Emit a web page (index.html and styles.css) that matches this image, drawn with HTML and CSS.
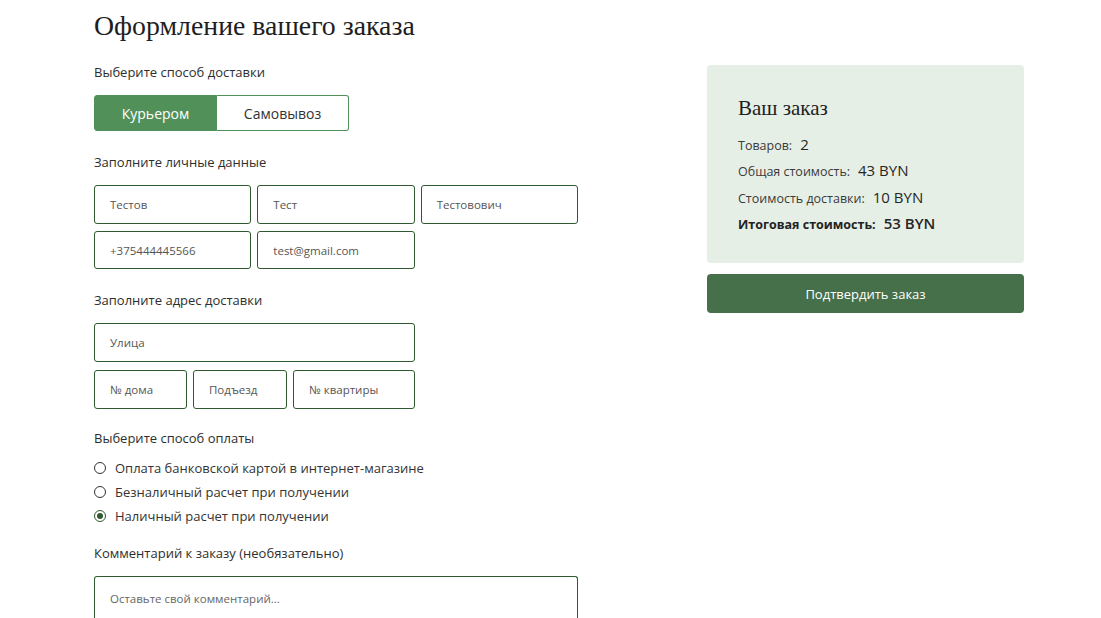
FILE: index.html
```html
<!DOCTYPE html>
<html lang="ru">
<head>
<meta charset="utf-8">
<title>Оформление вашего заказа</title>
<link rel="stylesheet" href="styles.css">
</head>
<body>
<div class="page">
  <main class="form-col">
    <h1 class="title">Оформление вашего заказа</h1>

    <p class="label label-first">Выберите способ доставки</p>
    <div class="toggle">
      <button class="toggle-btn active">Курьером</button>
      <button class="toggle-btn">Самовывоз</button>
    </div>

    <p class="label">Заполните личные данные</p>
    <div class="grid3">
      <div class="field">Тестов</div>
      <div class="field">Тест</div>
      <div class="field">Тестовович</div>
      <div class="field">+375444445566</div>
      <div class="field">test@gmail.com</div>
    </div>

    <p class="label label-addr">Заполните адрес доставки</p>
    <div class="address">
      <div class="field field-street">Улица</div>
      <div class="field">№ дома</div>
      <div class="field">Подъезд</div>
      <div class="field">№ квартиры</div>
    </div>

    <p class="label label-pay">Выберите способ оплаты</p>
    <div class="radios">
      <div class="radio"><span class="dot"></span>Оплата банковской картой в интернет-магазине</div>
      <div class="radio"><span class="dot"></span>Безналичный расчет при получении</div>
      <div class="radio"><span class="dot checked"></span>Наличный расчет при получении</div>
    </div>

    <p class="label label-comment">Комментарий к заказу (необязательно)</p>
    <div class="comment">Оставьте свой комментарий...</div>
  </main>

  <aside class="summary-col">
    <div class="summary">
      <h2 class="summary-title">Ваш заказ</h2>
      <div class="row"><span class="k">Товаров:</span><span class="v">2</span></div>
      <div class="row"><span class="k">Общая стоимость:</span><span class="v">43 BYN</span></div>
      <div class="row"><span class="k">Стоимость доставки:</span><span class="v">10 BYN</span></div>
      <div class="row total"><span class="k">Итоговая стоимость:</span><span class="v">53 BYN</span></div>
    </div>
    <button class="confirm">Подтвердить заказ</button>
  </aside>
</div>
</body>
</html>
```

FILE: styles.css
```css
* { box-sizing: border-box; }
html, body { margin: 0; background: #fff; }
body {
  font-family: "Open Sans", "Noto Sans", sans-serif;
  color: #2a2a2a;
  overflow: hidden;
  height: 618px;
}
.page {
  display: flex;
  padding-left: 94px;
  gap: 129px;
  align-items: flex-start;
}
.form-col { width: 484px; display: flex; flex-direction: column; }
.title {
  margin: 10px 0 0;
  font-family: "Liberation Serif", "DejaVu Serif", serif;
  font-weight: 400;
  font-size: 27.8px;
  line-height: 32px;
  color: #1e1e1e;
}
.label {
  margin: 23px 0 15px;
  font-size: 13px;
  line-height: 16px;
  color: #2e2e2e;
}
.label-first { margin-top: 22px; }
.label-addr { margin-top: 23px; }
.label-pay { margin-top: 21px; margin-bottom: 10px; }
.label-comment { margin-top: 17px; }

.toggle { display: flex; width: 255px; height: 36px; }
.toggle-btn {
  font-family: inherit;
  font-size: 14px;
  border: 1px solid #52905a;
  background: #fff;
  color: #333;
  padding: 0;
  cursor: pointer;
}
.toggle-btn:first-child { width: 123px; border-radius: 3px 0 0 3px; }
.toggle-btn:last-child { flex: 1; border-radius: 0 3px 3px 0; border-left: none; }
.toggle-btn.active { background: #52905a; color: #fff; }

.grid3 {
  display: grid;
  grid-template-columns: repeat(3, 1fr);
  gap: 7px 6px;
}
.field {
  height: 39px;
  border: 1px solid #2f5a2f;
  border-radius: 3px;
  padding: 0 15px;
  display: flex;
  align-items: center;
  font-size: 11.5px;
  color: #555;
}
.grid3 .field:nth-child(n+4) { height: 38px; }
.address {
  width: 321px;
  display: grid;
  grid-template-columns: 93px 94px 1fr;
  gap: 8px 6px;
}
.field-street { grid-column: 1 / -1; }

.radios { display: flex; flex-direction: column; }
.radio {
  display: flex;
  align-items: center;
  gap: 9px;
  height: 24px;
  font-size: 13px;
  color: #333;
}
.dot {
  width: 12px;
  height: 12px;
  border: 1.5px solid #333;
  border-radius: 50%;
  flex: none;
  display: flex;
  align-items: center;
  justify-content: center;
}
.dot.checked { border-color: #2f5a2f; }
.dot.checked::after {
  content: "";
  width: 6px;
  height: 6px;
  border-radius: 50%;
  background: #2f5a2f;
}

.comment {
  height: 60px;
  border: 1px solid #2f5a2f;
  border-bottom: none;
  border-radius: 3px 3px 0 0;
  padding: 14px 15px;
  font-size: 11.5px;
  color: #666;
}

.summary-col { width: 317px; margin-top: 65px; display: flex; flex-direction: column; gap: 11px; }
.summary {
  background: #e6efe6;
  border-radius: 4px;
  padding: 31px 31px 27px;
}
.summary-title {
  margin: 0 0 11px;
  font-family: "Liberation Serif", "DejaVu Serif", serif;
  font-weight: 400;
  font-size: 21px;
  line-height: 24px;
  color: #1e1e1e;
}
.row {
  display: flex;
  align-items: baseline;
  gap: 8px;
  height: 26.3px;
  line-height: 26.3px;
}
.row .k { font-size: 12.5px; color: #3a3a3a; }
.row .v { font-size: 15px; font-weight: 500; color: #262626; }
.row.total .k { font-weight: 700; color: #222; font-size: 12.5px; }
.row.total .v { font-weight: 600; }
.confirm {
  height: 39px;
  border: none;
  border-radius: 4px;
  background: #46704a;
  color: #fff;
  font-family: inherit;
  font-size: 13px;
  cursor: pointer;
}
```
